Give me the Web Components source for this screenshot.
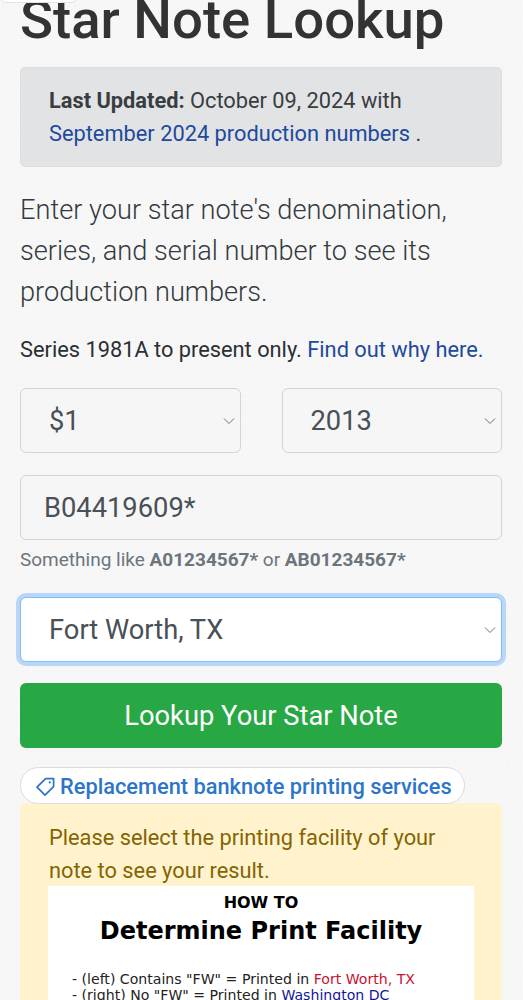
<!DOCTYPE html>
<html>
<head>
<meta charset="utf-8">
<title>Star Note Lookup</title>
<style>
  html, body { height: 1000px; overflow: hidden; }
  body {
    margin: 0;
    font-family: Roboto, "Liberation Sans", sans-serif;
    color: #343a40;
    background-color: #f6f6f6;
    background-image:
      repeating-linear-gradient(0deg, rgba(255,255,255,.2) 0 1px, transparent 1px 6px),
      repeating-linear-gradient(90deg, rgba(255,255,255,.2) 0 1px, transparent 1px 6px);
  }
</style>
</head>
<body>
<lookup-page>
  <page-title>Star Note Lookup</page-title>
  <info-alert>
    <b>Last Updated:</b> October 09, 2024 with<br>
    <a>September 2024 production numbers</a> .
  </info-alert>
  <lead-text>Enter your star note's denomination, series, and serial number to see its production numbers.</lead-text>
  <small-note>Series 1981A to present only. <a>Find out why here.</a></small-note>
  <lookup-form>
    <select-box value="$1" slot="denom"></select-box>
    <select-box value="2013" slot="series"></select-box>
    <serial-field value="B04419609*" slot="serial">Something like <b>A01234567*</b> or <b>AB01234567*</b></serial-field>
    <select-box value="Fort Worth, TX" focused slot="facility"></select-box>
    <submit-button slot="submit">Lookup Your Star Note</submit-button>
  </lookup-form>
  <tag-pill>Replacement banknote printing services</tag-pill>
  <warning-panel>
    Please select the printing facility of your note to see your result.
    <facility-guide slot="guide"></facility-guide>
  </warning-panel>
</lookup-page>

<script>
function define(name, html) {
  customElements.define(name, class extends HTMLElement {
    constructor() {
      super();
      this.attachShadow({ mode: "open" });
      this.shadowRoot.innerHTML = html;
    }
  });
}

define("lookup-page", `
  <style>
    :host { display: block; padding: 0 21px 0 20px; position: relative; }
    .tab {
      position: absolute; left: 0; top: -8px; width: 77px; height: 11px;
      background: #fff; border: 1px solid #e2e2e2; border-radius: 0 0 6px 6px; box-sizing: border-box;
    }
  </style>
  <div class="tab"></div>
  <slot></slot>
`);

define("page-title", `
  <style>
    :host {
      display: block; height: 67px;
      font-size: 54.5px; font-weight: 500; line-height: 39px; color: #333;
      white-space: nowrap;
    }
  </style>
  <slot></slot>
`);

define("info-alert", `
  <style>
    :host {
      display: block; box-sizing: border-box; height: 100px; padding: 16px 28px 0;
      background: #e2e3e5; border: 1px solid #dcdde0; border-radius: 5px;
      font-size: 21.8px; line-height: 33px; color: #383d41;
    }
    ::slotted(b) { font-weight: 700; }
    ::slotted(a) { color: #1d4a9c; }
  </style>
  <slot></slot>
`);

define("lead-text", `
  <style>
    :host {
      display: block; margin-top: 23px;
      font-size: 27.2px; font-weight: 300; line-height: 41px; color: #343a40;
    }
  </style>
  <slot></slot>
`);

define("small-note", `
  <style>
    :host {
      display: block; margin-top: 20px;
      font-size: 21.8px; line-height: 33px; color: #2b2f33; white-space: nowrap;
    }
    ::slotted(a) { color: #1d4a9c; }
  </style>
  <slot></slot>
`);

define("lookup-form", `
  <style>
    :host { display: block; margin-top: 22px; }
    .row { display: grid; grid-template-columns: 1fr 1fr; gap: 41px; }
    .serial { margin-top: 22px; }
    .facility { margin-top: 22px; }
    .submit { margin-top: 21px; }
  </style>
  <div class="row">
    <slot name="denom"></slot>
    <slot name="series"></slot>
  </div>
  <div class="serial"><slot name="serial"></slot></div>
  <div class="facility"><slot name="facility"></slot></div>
  <div class="submit"><slot name="submit"></slot></div>
`);

class SelectBox extends HTMLElement {
  constructor() {
    super();
    this.attachShadow({ mode: "open" });
  }
  connectedCallback() {
    this.shadowRoot.innerHTML = `
      <style>
        :host {
          display: flex; align-items: center; justify-content: space-between; box-sizing: border-box;
          height: 65px; padding: 0 5px 0 28px;
          background: #f6f6f6; border: 1px solid #d3d4d6; border-radius: 6px;
          font-size: 27.3px; color: #495057;
        }
        :host([focused]) {
          background: #fff; border-color: #80bdff;
          box-shadow: 0 0 0 4px #b9d6f6;
        }
        svg { width: 12px; height: 12px; fill: none; stroke: #6b7076; stroke-width: 1; }
      </style>
      <span>${this.getAttribute("value")}</span>
      <svg viewBox="0 0 12 12"><path d="M1 3.5 6 8.5 11 3.5"/></svg>
    `;
  }
}
customElements.define("select-box", SelectBox);

class SerialField extends HTMLElement {
  constructor() {
    super();
    this.attachShadow({ mode: "open" });
  }
  connectedCallback() {
    this.shadowRoot.innerHTML = `
      <style>
        :host { display: block; }
        .input {
          box-sizing: border-box; height: 65px; padding: 0 23px; display: flex; align-items: center;
          background: #f6f6f6; border: 1px solid #d3d4d6; border-radius: 6px;
          font-size: 27.3px; color: #495057;
        }
        .hint { margin-top: 5px; font-size: 19px; line-height: 30px; color: #6c757d; white-space: nowrap; }
        ::slotted(b) { font-weight: 700; }
      </style>
      <div class="input">${this.getAttribute("value")}</div>
      <div class="hint"><slot></slot></div>
    `;
  }
}
customElements.define("serial-field", SerialField);

define("submit-button", `
  <style>
    :host {
      display: flex; align-items: center; justify-content: center; box-sizing: border-box; height: 65px;
      background: #28a745; border-radius: 6px;
      font-size: 27.3px; color: #fff;
    }
  </style>
  <slot></slot>
`);

define("tag-pill", `
  <style>
    :host {
      display: flex; align-items: center; gap: 5px; box-sizing: border-box;
      width: 445px; height: 37px; margin-top: 19px; padding: 1px 14px 0 15px;
      background: #fff; border: 1px solid #dcdcdc; border-radius: 19px;
      font-size: 21.8px; font-weight: 500; color: #2c75c9; white-space: nowrap;
      position: relative; z-index: 1;
    }
    svg { width: 19px; height: 19px; flex: none; fill: none; stroke: #2c75c9; stroke-width: 1.7; stroke-linejoin: round; }
  </style>
  <svg viewBox="0 0 19 19">
    <path d="M1 10.2 9.6 1.6H17.6V9.6L9 18.2Z"/>
    <circle cx="13.8" cy="5.4" r="1.1" fill="#2c75c9" stroke="none"/>
  </svg>
  <slot></slot>
`);

define("warning-panel", `
  <style>
    :host {
      display: block; box-sizing: border-box; height: 300px; margin-top: -1px; padding: 18px 28px 0 29px;
      background: #fff3cd; border-radius: 6px;
      font-size: 21.8px; line-height: 33px; color: #856404;
    }
  </style>
  <slot></slot>
  <slot name="guide"></slot>
`);

define("facility-guide", `
  <style>
    :host {
      display: block; box-sizing: border-box; margin: -1px 0 0 -1px; height: 160px;
      background: #fff; color: #000; text-align: center;
      font-family: "DejaVu Sans", sans-serif;
    }
    .how { padding-top: 7px; font-size: 16px; font-weight: 700; line-height: 20px; }
    .title { margin-top: 3px; font-size: 24px; font-weight: 700; line-height: 30px; }
    ul {
      list-style: none; margin: 25px 0 0; padding: 0 0 0 24px;
      text-align: left; font-size: 14.1px; line-height: 16px; color: #222; white-space: nowrap;
    }
    .fw { color: #c8102e; }
    .dc { color: #14149b; }
  </style>
  <div class="how">HOW TO</div>
  <div class="title">Determine Print Facility</div>
  <ul>
    <li>- (left) Contains "FW" = Printed in <span class="fw">Fort Worth, TX</span></li>
    <li>- (right) No "FW" = Printed in <span class="dc">Washington DC</span></li>
  </ul>
`);
</script>
</body>
</html>
